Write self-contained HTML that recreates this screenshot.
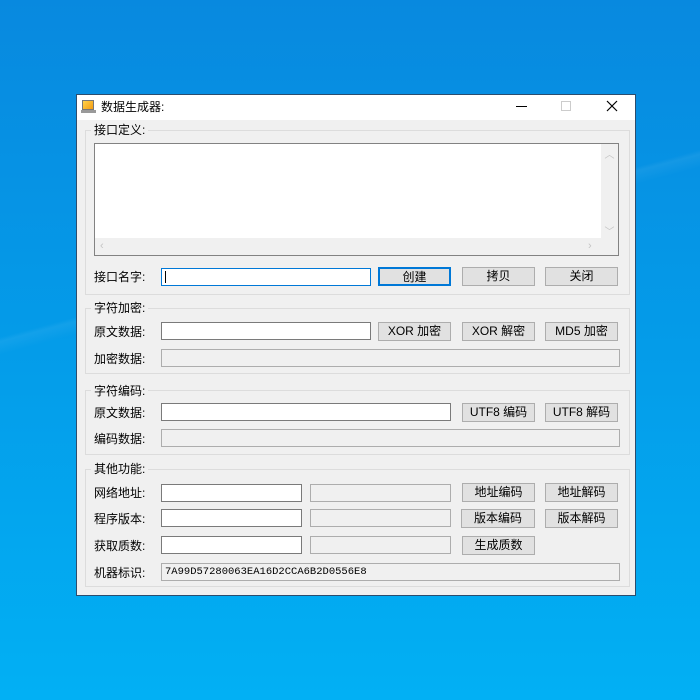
<!DOCTYPE html>
<html><head><meta charset="utf-8"><style>
*{box-sizing:border-box;margin:0;padding:0}
body{width:700px;height:700px;overflow:hidden;position:relative;background:linear-gradient(180deg,#0889df 0%,#049ce9 50%,#02b0f4 100%);font-family:"Liberation Sans","Noto Sans CJK SC",sans-serif;font-size:12px;color:#000}
.a{position:absolute}
.win{left:76px;top:94px;width:560px;height:502px;background:#f0f0f0;border:1px solid #2b4d6e}
.title{left:0;top:0;width:558px;height:25px;background:#fff}
.grp{border:1px solid #dcdcdc}
.lbl{background:#f0f0f0;padding:0 3px;line-height:14px}
.in{background:#fff;border:1px solid #7a7a7a}
.ro{background:#f0f0f0;border:1px solid #adadad}
.btn{background:#e1e1e1;border:1px solid #adadad;text-align:center;line-height:16px}
.t{line-height:14px}
</style></head><body>
<div class="a" style="left:0;top:0;width:700px;height:700px;background:linear-gradient(165deg,transparent 38%,rgba(255,255,255,0.06) 38.5%,transparent 40%)"></div>
<div class="a win">
 <div class="a title">
  <div class="a" style="left:5px;top:5px;width:12px;height:10px;background:linear-gradient(135deg,#ffd24a,#f39c12);border:1px solid #777"></div>
  <div class="a" style="left:4px;top:15px;width:15px;height:3px;background:#9a9a9a"></div>
  <div class="a t" style="left:24px;top:5px">数据生成器:</div>
  <div class="a" style="left:439px;top:11px;width:11px;height:1px;background:#000"></div>
  <div class="a" style="left:484px;top:6px;width:10px;height:10px;border:1px solid #ccc"></div>
  <svg class="a" style="left:529px;top:5px" width="12" height="12"><path d="M1 1L11 11M11 1L1 11" stroke="#000" stroke-width="1.2"/></svg>
 </div>
</div>
<!-- group 1 -->
<div class="a grp" style="left:85px;top:130px;width:545px;height:165px"></div>
<div class="a lbl" style="left:91px;top:123px">接口定义:</div>
<div class="a" style="left:94px;top:143px;width:525px;height:113px;background:#fff;border:1px solid #828282">
 <div class="a" style="right:0;top:0;width:17px;height:94px;background:#f0f0f0;color:#c4c4c4;font-size:10px;text-align:center">
  <div style="margin-top:2px">︿</div><div style="margin-top:62px">﹀</div></div>
 <div class="a" style="left:0;bottom:0;width:523px;height:17px;background:#f0f0f0;color:#c4c4c4;font-size:11px;line-height:17px">
  <span style="margin-left:5px">‹</span><span style="position:absolute;left:493px">›</span></div>
</div>
<div class="a t" style="left:94px;top:270px">接口名字:</div>
<div class="a in" style="left:161px;top:268px;width:210px;height:18px;border-color:#0078d7"><div class="a" style="left:3px;top:2px;width:1px;height:12px;background:#000"></div></div>
<div class="a btn" style="left:378px;top:267px;width:73px;height:19px;border:2px solid #0078d7">创建</div>
<div class="a btn" style="left:462px;top:267px;width:73px;height:19px">拷贝</div>
<div class="a btn" style="left:545px;top:267px;width:73px;height:19px">关闭</div>
<!-- group 2 -->
<div class="a grp" style="left:85px;top:308px;width:545px;height:66px"></div>
<div class="a lbl" style="left:91px;top:301px">字符加密:</div>
<div class="a t" style="left:94px;top:325px">原文数据:</div>
<div class="a in" style="left:161px;top:322px;width:210px;height:18px"></div>
<div class="a btn" style="left:378px;top:322px;width:73px;height:19px">XOR 加密</div>
<div class="a btn" style="left:462px;top:322px;width:73px;height:19px">XOR 解密</div>
<div class="a btn" style="left:545px;top:322px;width:73px;height:19px">MD5 加密</div>
<div class="a t" style="left:94px;top:352px">加密数据:</div>
<div class="a ro" style="left:161px;top:349px;width:459px;height:18px"></div>
<!-- group 3 -->
<div class="a grp" style="left:85px;top:390px;width:545px;height:65px"></div>
<div class="a lbl" style="left:91px;top:384px">字符编码:</div>
<div class="a t" style="left:94px;top:406px">原文数据:</div>
<div class="a in" style="left:161px;top:403px;width:290px;height:18px"></div>
<div class="a btn" style="left:462px;top:403px;width:73px;height:19px">UTF8 编码</div>
<div class="a btn" style="left:545px;top:403px;width:73px;height:19px">UTF8 解码</div>
<div class="a t" style="left:94px;top:432px">编码数据:</div>
<div class="a ro" style="left:161px;top:429px;width:459px;height:18px"></div>
<!-- group 4 -->
<div class="a grp" style="left:85px;top:469px;width:545px;height:118px"></div>
<div class="a lbl" style="left:91px;top:462px">其他功能:</div>
<div class="a t" style="left:94px;top:486px">网络地址:</div>
<div class="a in" style="left:161px;top:484px;width:141px;height:18px"></div>
<div class="a ro" style="left:310px;top:484px;width:141px;height:18px"></div>
<div class="a btn" style="left:462px;top:483px;width:73px;height:19px">地址编码</div>
<div class="a btn" style="left:545px;top:483px;width:73px;height:19px">地址解码</div>
<div class="a t" style="left:94px;top:512px">程序版本:</div>
<div class="a in" style="left:161px;top:509px;width:141px;height:18px"></div>
<div class="a ro" style="left:310px;top:509px;width:141px;height:18px"></div>
<div class="a btn" style="left:461px;top:509px;width:74px;height:19px">版本编码</div>
<div class="a btn" style="left:545px;top:509px;width:73px;height:19px">版本解码</div>
<div class="a t" style="left:94px;top:539px">获取质数:</div>
<div class="a in" style="left:161px;top:536px;width:141px;height:18px"></div>
<div class="a ro" style="left:310px;top:536px;width:141px;height:18px"></div>
<div class="a btn" style="left:462px;top:536px;width:73px;height:19px">生成质数</div>
<div class="a t" style="left:94px;top:566px">机器标识:</div>
<div class="a ro" style="left:161px;top:563px;width:459px;height:18px;font-family:'Liberation Mono',monospace;font-size:10.5px;line-height:16px;padding-left:3px">7A99D57280063EA16D2CCA6B2D0556E8</div>
</body></html>
